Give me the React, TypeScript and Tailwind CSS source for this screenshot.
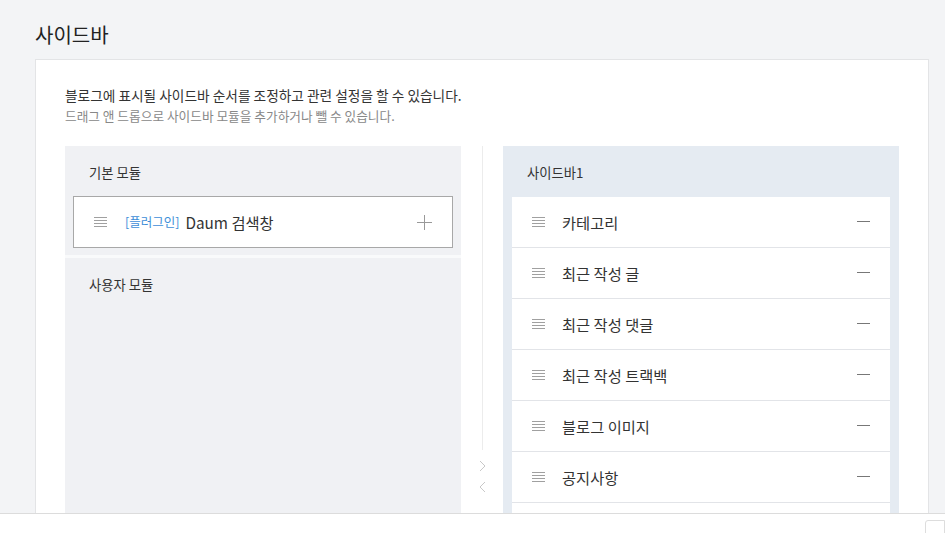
import React from "react";

const font = { fontFamily: '"Noto Sans CJK KR", "Noto Sans", sans-serif' };

function DragIcon() {
  return (
    <svg width="13" height="10" viewBox="0 0 13 10" className="shrink-0">
      <g stroke="#a0a0a0" strokeWidth="1">
        <line x1="0" y1="0.5" x2="13" y2="0.5" />
        <line x1="0" y1="3.5" x2="13" y2="3.5" />
        <line x1="0" y1="6.5" x2="13" y2="6.5" />
        <line x1="0" y1="9.5" x2="13" y2="9.5" />
      </g>
    </svg>
  );
}

function PlusIcon() {
  return (
    <svg width="15" height="15" viewBox="0 0 15 15">
      <g stroke="#999" strokeWidth="1">
        <line x1="7.5" y1="0" x2="7.5" y2="15" />
        <line x1="0" y1="7.5" x2="15" y2="7.5" />
      </g>
    </svg>
  );
}

function MinusIcon() {
  return (
    <svg width="13" height="2" viewBox="0 0 13 2">
      <line x1="0" y1="0.5" x2="13" y2="0.5" stroke="#777" strokeWidth="1" />
    </svg>
  );
}

const items = ["카테고리", "최근 작성 글", "최근 작성 댓글", "최근 작성 트랙백", "블로그 이미지", "공지사항"];

export default function App() {
  return (
    <div style={font} className="h-[533px] w-[945px] overflow-hidden bg-[#f3f4f6] flex flex-col">
      <div className="flex-1 overflow-hidden pl-[35px] pr-[16px]">
        <h1 className="pt-[21px] h-[59px] text-[20px] leading-[28px] text-[#222]">사이드바</h1>
        <div className="flex">
          <div className="w-[895px] bg-white border border-[#e3e4e6] px-[29px] pt-[25px] h-[600px]">
            <p className="text-[13.7px] leading-[20px] text-[#333]">블로그에 표시될 사이드바 순서를 조정하고 관련 설정을 할 수 있습니다.</p>
            <p className="text-[12.7px] leading-[20px] text-[#888] mt-[1px]">드래그 앤 드롭으로 사이드바 모듈을 추가하거나 뺄 수 있습니다.</p>
            <div className="flex mt-[20px]">
              <div className="w-[396px] flex flex-col bg-[#f9fafb]">
                <div className="bg-[#f0f1f4] pt-[17px] px-[8px] pb-[7px]">
                  <div className="pl-[16px] text-[13.3px] leading-[20px] text-[#333] h-[33px]">기본 모듈</div>
                  <div className="h-[52px] bg-white border border-[#a8a8a8] flex items-center pl-[20px] pr-[20px]">
                    <DragIcon />
                    <span className="ml-[18px] text-[12.5px] text-[#3e8ed8]">[플러그인]</span>
                    <span className="ml-[6px] text-[15.3px] text-[#333]">Daum 검색창</span>
                    <span className="ml-auto"><PlusIcon /></span>
                  </div>
                </div>
                <div className="mt-[3px] bg-[#f0f1f4] h-[400px] pt-[17px] pl-[24px]">
                  <div className="text-[13.3px] leading-[20px] text-[#333]">사용자 모듈</div>
                </div>
              </div>
              <div className="w-[42px] flex flex-col items-center">
                <div className="w-px h-[304px] bg-[#ececec]" />
                <div className="mt-[10px] flex flex-col items-center">
                  <svg width="7" height="12" viewBox="0 0 7 12"><polyline points="1,1 6,6 1,11" fill="none" stroke="#c8c8c8" strokeWidth="1" /></svg>
                  <svg className="mt-[9px]" width="7" height="12" viewBox="0 0 7 12"><polyline points="6,1 1,6 6,11" fill="none" stroke="#c8c8c8" strokeWidth="1" /></svg>
                </div>
              </div>
              <div className="w-[396px] bg-[#e5ebf2] pt-[17px] px-[9px] h-[420px]">
                <div className="pl-[15px] text-[13.3px] leading-[20px] text-[#333] h-[34px]">사이드바1</div>
                <div className="flex flex-col bg-white">
                  {items.map((t) => (
                    <div key={t} className="h-[51px] border-b border-[#e2e4e8] flex items-center pl-[20px] pr-[20px]">
                      <DragIcon />
                      <span className="ml-[17px] text-[15.3px] text-[#333]">{t}</span>
                      <span className="ml-auto"><MinusIcon /></span>
                    </div>
                  ))}
                  <div className="h-[51px]" />
                </div>
              </div>
            </div>
          </div>
          <div className="ml-[3px] w-px h-[600px] bg-[#e6e7e9]" />
        </div>
      </div>
      <div className="h-[20px] shrink-0 bg-white border-t border-[#dcdcdc] flex justify-end">
        <div className="mt-[6px] w-[20px] h-[20px] border border-[#ddd] rounded-tl-[3px]" />
      </div>
    </div>
  );
}
